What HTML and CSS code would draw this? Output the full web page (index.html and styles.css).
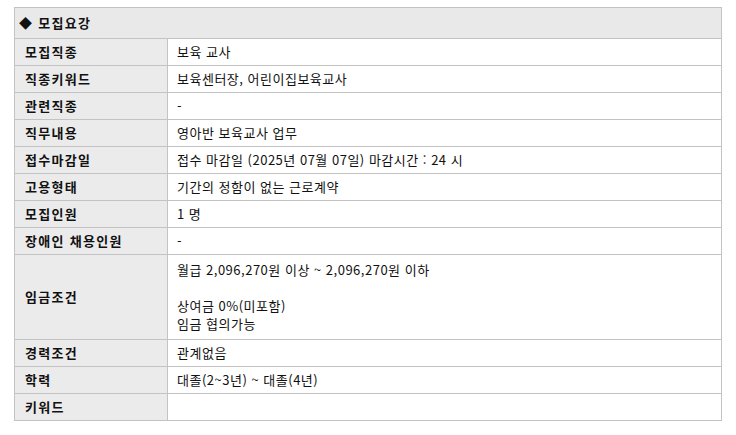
FILE: index.html
```html
<!DOCTYPE html>
<html lang="ko">
<head>
<meta charset="utf-8">
<link rel="stylesheet" href="styles.css">
</head>
<body>
<div class="wrap">
<table class="info">
  <colgroup><col class="c-label"><col class="c-value"></colgroup>
  <thead>
    <tr><th colspan="2" class="head">◆ 모집요강</th></tr>
  </thead>
  <tbody>
    <tr><th>모집직종</th><td>보육 교사</td></tr>
    <tr><th>직종키워드</th><td>보육센터장, 어린이집보육교사</td></tr>
    <tr><th>관련직종</th><td>-</td></tr>
    <tr><th>직무내용</th><td>영아반 보육교사 업무</td></tr>
    <tr><th>접수마감일</th><td>접수 마감일 (2025년 07월 07일) 마감시간 : 24 시</td></tr>
    <tr><th>고용형태</th><td>기간의 정함이 없는 근로계약</td></tr>
    <tr><th>모집인원</th><td>1 명</td></tr>
    <tr><th>장애인 채용인원</th><td>-</td></tr>
    <tr class="tall"><th>임금조건</th><td>월급 2,096,270원 이상 ~ 2,096,270원 이하<br><br>상여금 0%(미포함)<br>임금 협의가능</td></tr>
    <tr><th>경력조건</th><td>관계없음</td></tr>
    <tr><th>학력</th><td>대졸(2~3년) ~ 대졸(4년)</td></tr>
    <tr><th>키워드</th><td></td></tr>
  </tbody>
</table>
</div>
</body>
</html>
```
FILE: styles.css
```css
html, body {
  margin: 0;
  padding: 0;
  background: #fff;
}
.wrap {
  padding: 7px 0 0 14px;
}
.info {
  border-collapse: collapse;
  width: 708px;
  table-layout: fixed;
  font-family: "Noto Sans CJK KR", "Noto Sans", sans-serif;
  font-size: 13px;
  color: #111;
}
.c-label { width: 153px; }
.info th, .info td {
  border: 1px solid #c3c3c3;
  height: 27px;
  box-sizing: border-box;
  padding: 3px 8px 3px 9px;
  line-height: 18px;
  text-align: left;
  vertical-align: middle;
}
.info th {
  background: #ebebeb;
  font-weight: bold;
  padding-left: 10px;
  letter-spacing: 1.3px;
}
.info td {
  background: #fff;
  font-weight: normal;
  letter-spacing: 0.5px;
}
.info th.head {
  height: 31px;
  background: #e9e9e9;
  padding-left: 4px;
}
.tall td {
  padding-top: 6px;
  padding-bottom: 6px;
  height: 85px;
}
```
